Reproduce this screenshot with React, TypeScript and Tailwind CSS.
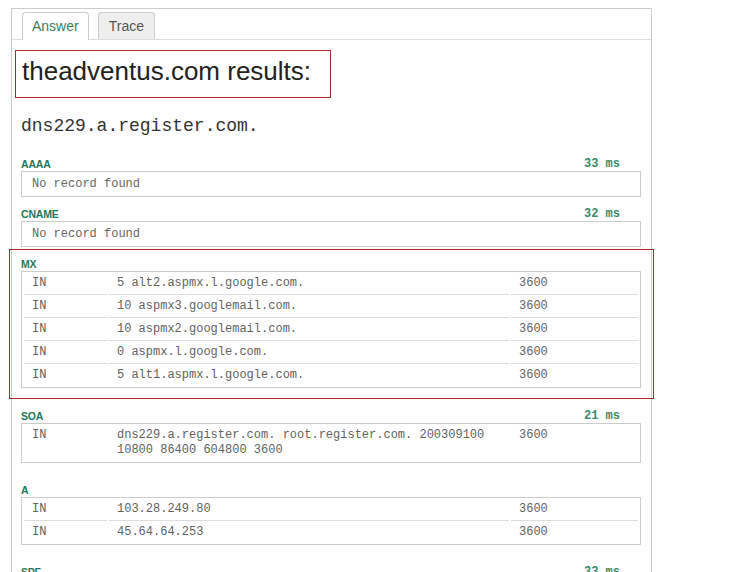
import React from "react";

type Row = [string, string, string];

interface Section {
  name: string;
  time?: string;
  empty?: boolean;
  rows?: Row[];
  highlight?: boolean;
  gap: string;
}

const SANS = { fontFamily: '"Liberation Sans", Arial, sans-serif' };
const MONO = { fontFamily: '"Liberation Mono", "Courier New", monospace' };

const SECTIONS: Section[] = [
  { name: "AAAA", time: "33 ms", empty: true, gap: "mt-[21px]" },
  { name: "CNAME", time: "32 ms", empty: true, gap: "mt-[10px]" },
  {
    name: "MX",
    highlight: true,
    gap: "mt-[2px]",
    rows: [
      ["IN", "5 alt2.aspmx.l.google.com.", "3600"],
      ["IN", "10 aspmx3.googlemail.com.", "3600"],
      ["IN", "10 aspmx2.googlemail.com.", "3600"],
      ["IN", "0 aspmx.l.google.com.", "3600"],
      ["IN", "5 alt1.aspmx.l.google.com.", "3600"],
    ],
  },
  {
    name: "SOA",
    time: "21 ms",
    gap: "mt-[10px]",
    rows: [["IN", "dns229.a.register.com. root.register.com. 200309100 10800 86400 604800 3600", "3600"]],
  },
  {
    name: "A",
    gap: "mt-[20px]",
    rows: [
      ["IN", "103.28.249.80", "3600"],
      ["IN", "45.64.64.253", "3600"],
    ],
  },
  { name: "SPF", time: "33 ms", empty: true, gap: "mt-[20px]" },
];

const RecordHeader = ({ name, time }: { name: string; time?: string }) => (
  <div className="flex h-[14px] items-center justify-between">
    <span className="text-[10.5px] font-bold leading-[14px] tracking-[-0.2px] text-[#23785a]" style={SANS}>
      {name}
    </span>
    {time && (
      <span className="pr-[21px] text-[12px] font-bold leading-[14px] text-[#3b8a6b]" style={MONO}>
        {time}
      </span>
    )}
  </div>
);

const RecordTable = ({ rows }: { rows: Row[] }) => (
  <div className="border border-[#ccc] pb-[1px]">
    <table className="w-full table-fixed border-separate border-spacing-x-[2px] border-spacing-y-0 text-[12px] leading-[15px] text-[#626262]" style={MONO}>
      <colgroup>
        <col className="w-[83px]" />
        <col className="w-[400px]" />
        <col />
      </colgroup>
      <tbody>
        {rows.map((row, i) => (
          <tr key={i}>
            {row.map((cell, j) => (
              <td
                key={j}
                className={`px-[8px] pt-[4px] pb-[3px] align-top ${i > 0 ? "border-t border-[#ddd]" : ""}`}
              >
                {cell}
              </td>
            ))}
          </tr>
        ))}
      </tbody>
    </table>
  </div>
);

const RecordSection = ({ section }: { section: Section }) => {
  const body = (
    <>
      <RecordHeader name={section.name} time={section.time} />
      {section.empty ? (
        <div className="flex h-[26px] items-center border border-[#ccc] px-[10px] text-[12px] text-[#666]" style={MONO}>
          No record found
        </div>
      ) : (
        <RecordTable rows={section.rows ?? []} />
      )}
    </>
  );

  if (section.highlight) {
    return (
      <div className={`${section.gap} -ml-[12px] -mr-[13px] border border-[#b3262d] pt-[7px] pb-[10px] pl-[11px] pr-[12px]`}>
        {body}
      </div>
    );
  }

  return <div className={section.gap}>{body}</div>;
};

export default function App() {
  return (
    <div className="h-[572px] overflow-hidden bg-white pt-[8px] pl-[11px]" style={SANS}>
      <div className="min-h-[600px] w-[641px] border border-b-0 border-[#ccc] bg-white">
        <div className="flex gap-[9px] border-b border-[#ddd] pt-[3px] pl-[10px]">
          <button className="-mb-px h-[28px] rounded-t-[4px] border border-b-0 border-[#ccc] bg-white px-[9px] text-[14px] text-[#3b7d62]">
            Answer
          </button>
          <button className="h-[27px] rounded-t-[4px] border border-b-0 border-[#ccc] bg-[#eee] px-[10px] text-[14px] text-[#555]">
            Trace
          </button>
        </div>

        <div className="pr-[10px] pl-[9px]">
          <div className="mt-[10px] -ml-[6px] h-[48px] w-[316px] border border-[#b3262d] pt-[5px] pl-[6px]">
            <h1 className="text-[26px] leading-[30px] text-[#222]">theadventus.com results:</h1>
          </div>

          <div className="mt-[18px] text-[18px] leading-[20px] text-[#333]" style={MONO}>
            dns229.a.register.com.
          </div>

          {SECTIONS.map((section) => (
            <RecordSection key={section.name} section={section} />
          ))}
        </div>
      </div>
    </div>
  );
}
